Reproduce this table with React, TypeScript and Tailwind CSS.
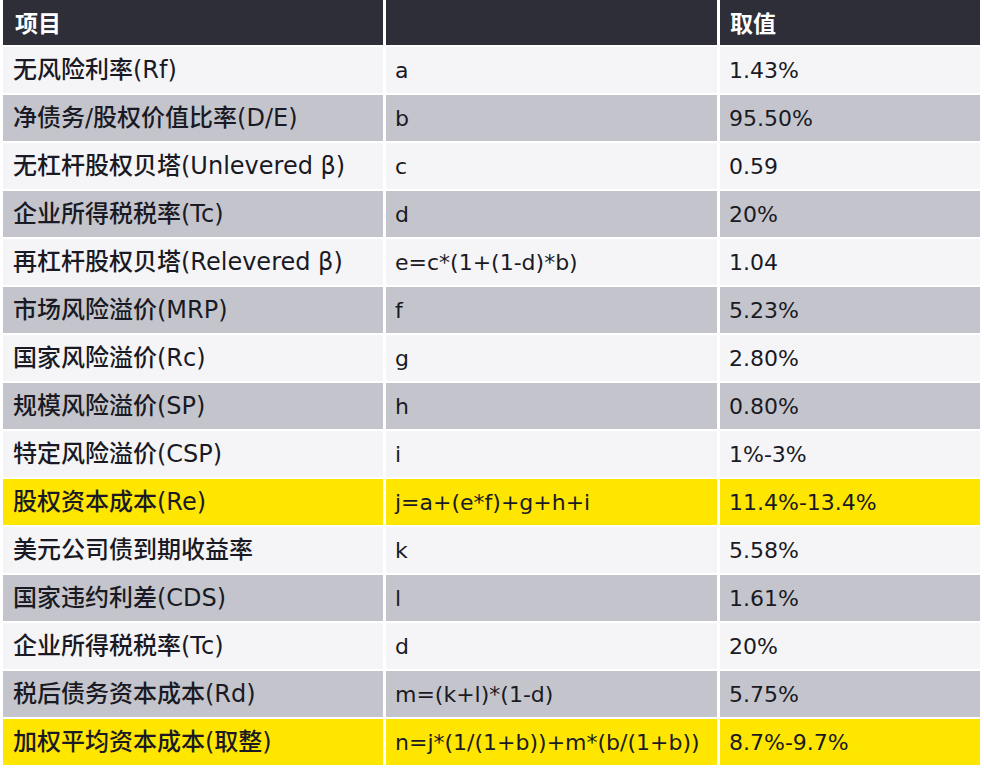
import React from "react";

type Row = {
  item: string;
  formula: string;
  value: string;
  tone: "light" | "gray" | "yellow";
};

const rows: Row[] = [
  { item: "无风险利率(Rf)", formula: "a", value: "1.43%", tone: "light" },
  { item: "净债务/股权价值比率(D/E)", formula: "b", value: "95.50%", tone: "gray" },
  { item: "无杠杆股权贝塔(Unlevered β)", formula: "c", value: "0.59", tone: "light" },
  { item: "企业所得税税率(Tc)", formula: "d", value: "20%", tone: "gray" },
  { item: "再杠杆股权贝塔(Relevered β)", formula: "e=c*(1+(1-d)*b)", value: "1.04", tone: "light" },
  { item: "市场风险溢价(MRP)", formula: "f", value: "5.23%", tone: "gray" },
  { item: "国家风险溢价(Rc)", formula: "g", value: "2.80%", tone: "light" },
  { item: "规模风险溢价(SP)", formula: "h", value: "0.80%", tone: "gray" },
  { item: "特定风险溢价(CSP)", formula: "i", value: "1%-3%", tone: "light" },
  { item: "股权资本成本(Re)", formula: "j=a+(e*f)+g+h+i", value: "11.4%-13.4%", tone: "yellow" },
  { item: "美元公司债到期收益率", formula: "k", value: "5.58%", tone: "light" },
  { item: "国家违约利差(CDS)", formula: "l", value: "1.61%", tone: "gray" },
  { item: "企业所得税税率(Tc)", formula: "d", value: "20%", tone: "light" },
  { item: "税后债务资本成本(Rd)", formula: "m=(k+l)*(1-d)", value: "5.75%", tone: "gray" },
  { item: "加权平均资本成本(取整)", formula: "n=j*(1/(1+b))+m*(b/(1+b))", value: "8.7%-9.7%", tone: "yellow" },
];

const toneClass = {
  light: "bg-[#f5f5f8]",
  gray: "bg-[#c4c5cc]",
  yellow: "bg-[#ffe600]",
};

// left column: CJK glyphs from Noto, latin from DejaVu (wider, like the original)
const itemFont = "font-['DejaVu_Sans','Noto_Sans_CJK_SC',sans-serif]";
const headFont = "font-['Noto_Sans_CJK_SC','Noto_Sans',sans-serif]";
const latin = "font-['DejaVu_Sans','Noto_Sans_CJK_SC',sans-serif]";

export default function App() {
  return (
    <div className="w-[984px] h-[773px] bg-white overflow-hidden">
      <div className="grid grid-cols-[380px_331px_260px] gap-x-[3px] gap-y-[2px] px-[3px] text-[#1a1a24]">
        <div className={`h-[45px] bg-[#2e2e38] flex items-center pl-[12px] text-white text-[23px] font-bold ${headFont}`}>
          项目
        </div>
        <div className="h-[45px] bg-[#2e2e38]" />
        <div className={`h-[45px] bg-[#2e2e38] flex items-center pl-[10px] text-white text-[23px] font-bold ${headFont}`}>
          取值
        </div>
        {rows.map((row, i) => (
          <React.Fragment key={i}>
            <div className={`h-[46px] flex items-center pl-[10px] text-[24px] font-medium whitespace-nowrap ${itemFont} ${toneClass[row.tone]}`}>
              {row.item}
            </div>
            <div className={`h-[46px] flex items-center pl-[9px] text-[22px] whitespace-nowrap ${latin} ${toneClass[row.tone]}`}>
              {row.formula}
            </div>
            <div className={`h-[46px] flex items-center pl-[9px] text-[22px] whitespace-nowrap ${latin} ${toneClass[row.tone]}`}>
              {row.value}
            </div>
          </React.Fragment>
        ))}
      </div>
    </div>
  );
}
